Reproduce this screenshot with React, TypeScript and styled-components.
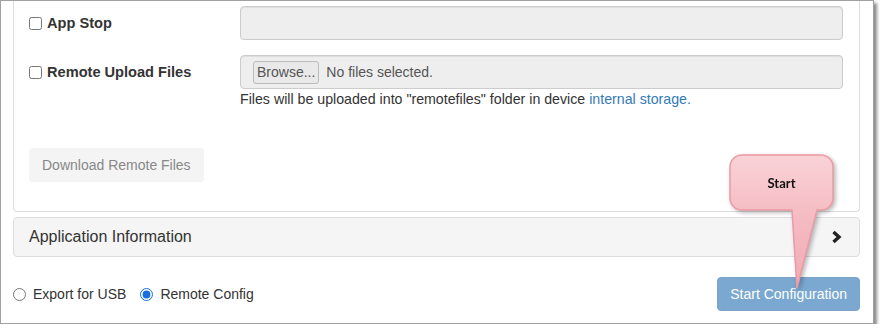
import React from "react";
import styled, { createGlobalStyle } from "styled-components";

const GlobalStyle = createGlobalStyle`
	body {
		margin: 0;
		background: #fff;
		font-family: "Liberation Sans", Arial, Helvetica, sans-serif;
		font-size: 14px;
		color: #333;
	}
`;

const Frame = styled.div`
	position: relative;
	box-sizing: border-box;
	width: 874px;
	border: 1px solid #a0a0a0;
	box-shadow: 3px 3px 3px rgba(0, 0, 0, 0.45);
	padding: 0 13px 12px 12px;
	background: #fff;
`;

const Panel = styled.section`
	border: 1px solid #ddd;
	border-top: none;
	border-radius: 0 0 4px 4px;
	padding: 5px 16px 29px 15px;
`;

const FormRow = styled.div<{ $gap?: number }>`
	display: grid;
	grid-template-columns: 211px 1fr;
	margin-bottom: ${(p) => p.$gap ?? 0}px;
`;

const CheckLabel = styled.label`
	display: flex;
	align-items: center;
	gap: 5px;
	height: 34px;
	font-weight: bold;
	font-size: 14.6px;
	color: #333;

	input {
		margin: 0;
		width: 13px;
		height: 13px;
	}
`;

const Field = styled.div`
	box-sizing: border-box;
	display: flex;
	align-items: center;
	gap: 7px;
	height: 34px;
	padding: 0 12px;
	background: #eee;
	border: 1px solid #ccc;
	border-radius: 4px;
	box-shadow: inset 0 1px 1px rgba(0, 0, 0, 0.075);
	color: #555;
`;

const BrowseButton = styled.span`
	box-sizing: border-box;
	display: inline-flex;
	align-items: center;
	height: 23px;
	padding: 0 3px;
	background: #e9e9e9;
	border: 1px solid #bbb;
	border-radius: 3px;
	color: #555;
`;

const Help = styled.p`
	margin: 0;
	line-height: 20px;
	font-size: 14.2px;
	color: #333;

	a {
		color: #337ab7;
		text-decoration: none;
	}
`;

const DownloadButton = styled.button`
	box-sizing: border-box;
	margin-top: 39px;
	height: 34px;
	padding: 0 12px;
	background: #f4f4f5;
	border: 1px solid #f4f4f5;
	border-radius: 3px;
	color: #888;
	font: inherit;
`;

const Accordion = styled.div`
	box-sizing: border-box;
	display: flex;
	align-items: center;
	justify-content: space-between;
	margin-top: 5px;
	height: 40px;
	padding: 0 17px 0 15px;
	background: #f5f5f5;
	border: 1px solid #ddd;
	border-radius: 4px;
	font-size: 16px;
	color: #333;
`;

const Footer = styled.div`
	display: flex;
	align-items: center;
	justify-content: space-between;
	margin-top: 20px;
`;

const RadioGroup = styled.div`
	display: flex;
	align-items: center;
	gap: 14px;
`;

const RadioLabel = styled.label`
	display: flex;
	align-items: center;
	gap: 7px;
	color: #333;

	input {
		margin: 0;
		width: 13px;
		height: 13px;
		accent-color: #1a6fe0;
	}
`;

const StartButton = styled.button`
	box-sizing: border-box;
	height: 34px;
	padding: 0 12px;
	background: #7aa8d0;
	border: 1px solid #7ba3c8;
	border-radius: 4px;
	color: #fff;
	font: inherit;
`;

const Callout = styled.div`
	position: absolute;
	left: 724px;
	top: 149px;
	width: 115px;
	height: 145px;
	filter: drop-shadow(2px 2px 2px rgba(0, 0, 0, 0.28));

	svg {
		display: block;
	}
`;

const CalloutText = styled.span`
	position: absolute;
	left: 5px;
	top: 5px;
	width: 103px;
	height: 55px;
	display: flex;
	align-items: center;
	justify-content: center;
	font-family: Lato, "Open Sans", sans-serif;
	font-weight: bold;
	font-size: 13px;
	color: #111;
`;

const Chevron = () => (
	<svg width="11" height="14" viewBox="0 0 11 14">
		<path d="M2.5 2 L8 7 L2.5 12" fill="none" stroke="#222" strokeWidth="3.4" />
	</svg>
);

const App = () => {
	return (
		<>
			<GlobalStyle />
			<Frame>
				<Panel>
					<FormRow $gap={15}>
						<CheckLabel>
							<input type="checkbox" />
							App Stop
						</CheckLabel>
						<Field />
					</FormRow>
					<FormRow>
						<CheckLabel>
							<input type="checkbox" />
							Remote Upload Files
						</CheckLabel>
						<div>
							<Field>
								<BrowseButton>Browse...</BrowseButton>
								<span>No files selected.</span>
							</Field>
							<Help>
								Files will be uploaded into "remotefiles" folder in device{" "}
								<a href="#">internal storage.</a>
							</Help>
						</div>
					</FormRow>
					<DownloadButton disabled>Download Remote Files</DownloadButton>
				</Panel>

				<Accordion>
					<span>Application Information</span>
					<Chevron />
				</Accordion>

				<Footer>
					<RadioGroup>
						<RadioLabel>
							<input type="radio" name="mode" />
							Export for USB
						</RadioLabel>
						<RadioLabel>
							<input type="radio" name="mode" defaultChecked />
							Remote Config
						</RadioLabel>
					</RadioGroup>
					<StartButton disabled>Start Configuration</StartButton>
				</Footer>

				<Callout>
					<svg width="115" height="145" viewBox="0 0 115 145">
						<defs>
							<linearGradient id="pink" x1="0" y1="0" x2="0" y2="1">
								<stop offset="0" stopColor="#f9d3d7" />
								<stop offset="0.45" stopColor="#f5bcc3" />
								<stop offset="1" stopColor="#f2aab3" />
							</linearGradient>
						</defs>
						<path
							d="M17 5 H96 A12 12 0 0 1 108 17 V48 A12 12 0 0 1 96 60 H92 L72 138 L67 60 H17 A12 12 0 0 1 5 48 V17 A12 12 0 0 1 17 5 Z"
							fill="url(#pink)"
							stroke="#ec9aa4"
							strokeWidth="1.5"
						/>
					</svg>
					<CalloutText>Start</CalloutText>
				</Callout>
			</Frame>
		</>
	);
};

export default App;
